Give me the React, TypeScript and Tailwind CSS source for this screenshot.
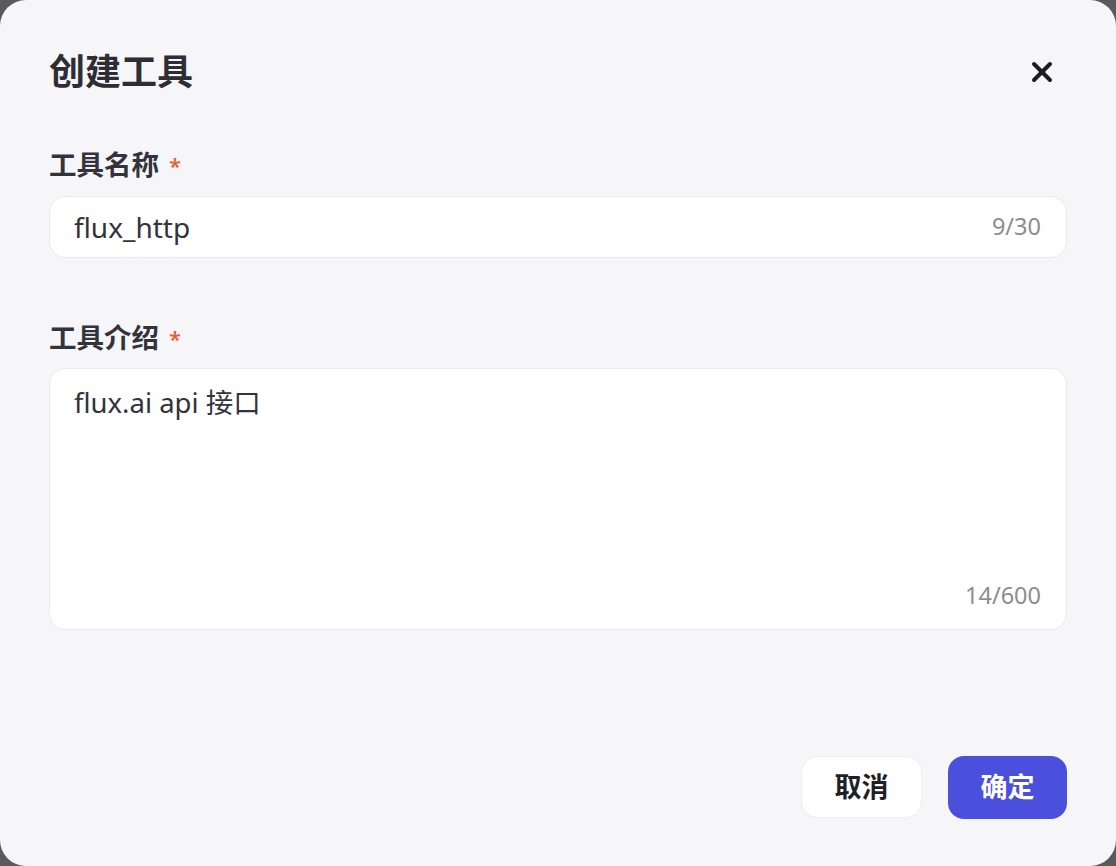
import { X } from "lucide-react";

const font = { fontFamily: '"Noto Sans", "Noto Sans CJK SC", sans-serif' };

function Label({ text }: { text: string }) {
  return (
    <div className="flex items-center gap-[10px] text-[27.5px] font-semibold leading-[36px] text-[#33333d]">
      <span>{text}</span>
      <span className="text-[22px] text-[#e5603a]">*</span>
    </div>
  );
}

export default function App() {
  return (
    <div className="h-[866px] w-[1116px] bg-[#5a5a5c]" style={font}>
      <div className="flex h-full w-full flex-col rounded-[26px] bg-[#f6f6f9] px-[49px] pb-[47px] pt-[49px]">
        <div className="flex items-center justify-between">
          <h1 className="text-[36px] font-bold leading-[46px] text-[#2d2d36]">创建工具</h1>
          <button type="button" aria-label="Close" className="mr-[9px] text-[#1c1c22]">
            <X className="h-[32px] w-[32px]" strokeWidth={3} />
          </button>
        </div>

        <div className="mt-[52px]">
          <Label text="工具名称" />
        </div>
        <div className="mt-[13px] flex h-[62px] items-center justify-between rounded-[16px] border border-[#e9e9f0] bg-white pl-[24px] pr-[25px]">
          <span className="text-[28px] text-[#33333d]">flux_http</span>
          <span className="text-[23.5px] text-[#8c8c92]">9/30</span>
        </div>

        <div className="mt-[62px]">
          <Label text="工具介绍" />
        </div>
        <div className="mt-[12px] flex h-[262px] flex-col justify-between rounded-[16px] border border-[#e9e9f0] bg-white pb-[16px] pl-[24px] pr-[25px] pt-[16px]">
          <span className="text-[27.5px] leading-[36px] text-[#33333d]">flux.ai api 接口</span>
          <span className="self-end text-[23.5px] text-[#8c8c92]">14/600</span>
        </div>

        <div className="mt-auto flex justify-end gap-[26px]">
          <button
            type="button"
            className="h-[62px] w-[121px] rounded-[16px] border border-[#ededf2] bg-white text-[27px] font-bold text-[#1f1f26]"
          >
            取消
          </button>
          <button
            type="button"
            className="h-[63px] w-[119px] rounded-[16px] bg-[#4a4fdc] text-[27px] font-bold text-white"
          >
            确定
          </button>
        </div>
      </div>
    </div>
  );
}
